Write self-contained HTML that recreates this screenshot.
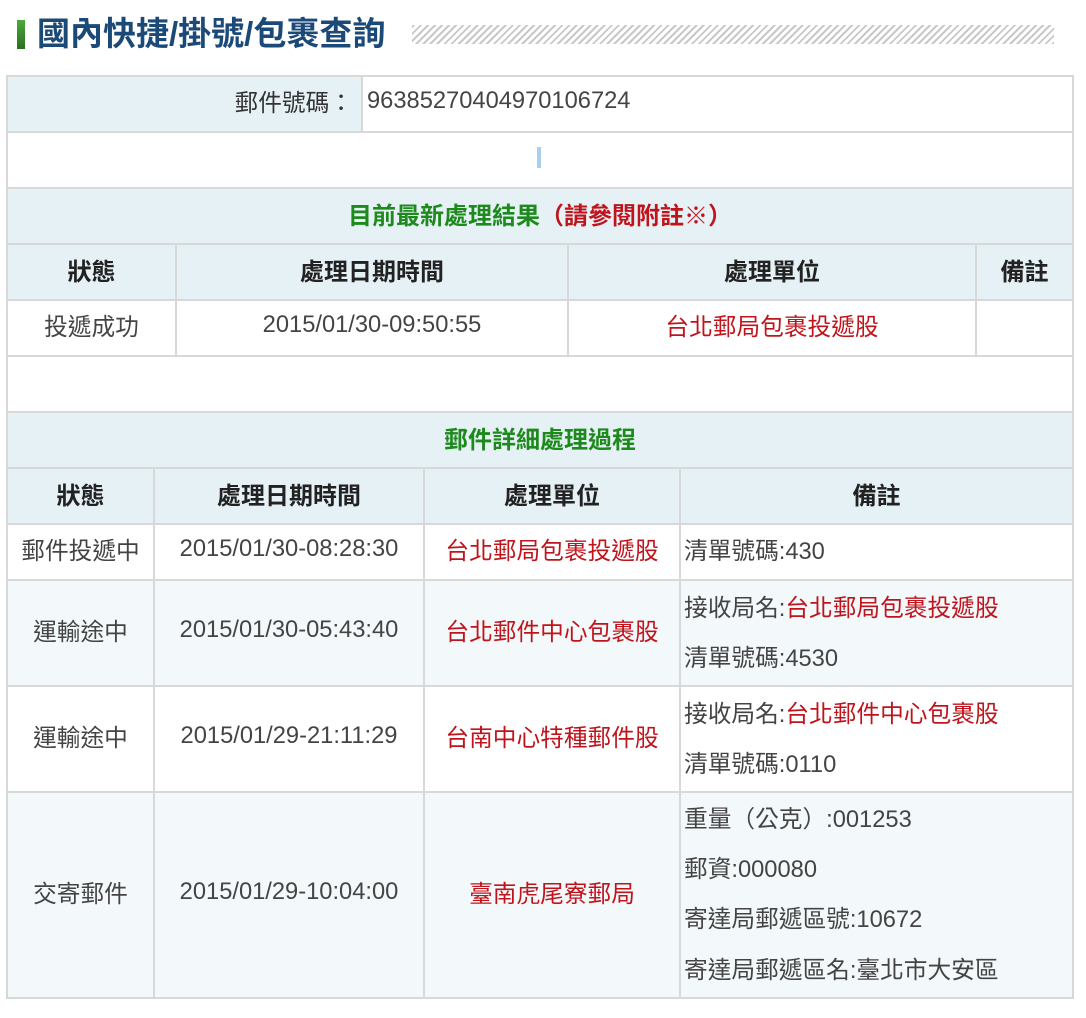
<!DOCTYPE html>
<html><head><meta charset="utf-8"><style>
body{margin:0;background:#fff;width:1086px;height:1018px;position:relative;overflow:hidden;font-family:"Liberation Sans","Noto Sans CJK TC",sans-serif;color:#444;}
.c{position:absolute;box-sizing:border-box;border:2px solid #d8d8d8;display:flex;align-items:center;justify-content:center;font-size:23.7px;background:#fff;padding-bottom:6px;}
.h{background:#e6f1f6;font-weight:bold;color:#222;font-size:24px;}
.l{background:#f3f8fa;}
.g{color:#1e8a1e;font-weight:bold;}
.r{color:#c0141c;}
.rm{justify-content:flex-start;padding-left:3px;}
.mt div{position:absolute;left:3px;white-space:nowrap;}
</style></head><body>
<div style="position:absolute;left:17px;top:20px;width:8px;height:29px;background:linear-gradient(#4caa3c,#2b6e22);"></div>
<div style="position:absolute;left:37px;top:13px;font-size:33px;font-weight:bold;color:#1b4a78;line-height:42px;">國內快捷/掛號/包裹查詢</div>
<div style="position:absolute;left:412px;top:25px;width:642px;height:19px;background:repeating-linear-gradient(-45deg,#c8c8c8 0 2px,#fff 2px 5px);"></div>

<div class="c h" style="left:6px;top:75px;width:357px;height:58px;justify-content:flex-end;padding-right:8px;font-weight:normal;color:#333;font-size:23.7px;">郵件號碼：</div>
<div class="c" style="left:361px;top:75px;width:713px;height:58px;justify-content:flex-start;padding-left:4px;color:#444;">96385270404970106724</div>
<div class="c" style="left:6px;top:131px;width:1068px;height:58px;padding-bottom:0"><div style="width:4px;height:21px;background:#a9d0ee;margin-left:-2px;margin-top:-6px"></div></div>
<div class="c h g" style="left:6px;top:187px;width:1068px;height:58px;">目前最新處理結果<span style="color:#c0141c">（請參閱附註※）</span></div>

<div class="c h" style="left:6px;top:243px;width:171px;height:58px;">狀態</div>
<div class="c h" style="left:175px;top:243px;width:394px;height:58px;">處理日期時間</div>
<div class="c h" style="left:567px;top:243px;width:410px;height:58px;">處理單位</div>
<div class="c h" style="left:975px;top:243px;width:99px;height:58px;">備註</div>
<div class="c" style="left:6px;top:299px;width:171px;height:58px;">投遞成功</div>
<div class="c" style="left:175px;top:299px;width:394px;height:58px;">2015/01/30-09:50:55</div>
<div class="c r" style="left:567px;top:299px;width:410px;height:58px;">台北郵局包裹投遞股</div>
<div class="c" style="left:975px;top:299px;width:99px;height:58px;"></div>
<div class="c" style="left:6px;top:355px;width:1068px;height:58px;"></div>
<div class="c h g" style="left:6px;top:411px;width:1068px;height:58px;">郵件詳細處理過程</div>

<div class="c h" style="left:6px;top:467px;width:149px;height:58px;">狀態</div>
<div class="c h" style="left:153px;top:467px;width:272px;height:58px;">處理日期時間</div>
<div class="c h" style="left:423px;top:467px;width:258px;height:58px;">處理單位</div>
<div class="c h" style="left:679px;top:467px;width:395px;height:58px;">備註</div>

<div class="c" style="left:6px;top:523px;width:149px;height:58px;">郵件投遞中</div>
<div class="c" style="left:153px;top:523px;width:272px;height:58px;">2015/01/30-08:28:30</div>
<div class="c r" style="left:423px;top:523px;width:258px;height:58px;">台北郵局包裹投遞股</div>
<div class="c rm" style="left:679px;top:523px;width:395px;height:58px;">清單號碼:430</div>

<div class="c l" style="left:6px;top:579px;width:149px;height:108px;">運輸途中</div>
<div class="c l" style="left:153px;top:579px;width:272px;height:108px;">2015/01/30-05:43:40</div>
<div class="c l r" style="left:423px;top:579px;width:258px;height:108px;">台北郵件中心包裹股</div>
<div class="c l mt" style="left:679px;top:579px;width:395px;height:108px;"><div style="top:8px">接收局名:<span class="r">台北郵局包裹投遞股</span></div><div style="top:58px">清單號碼:4530</div></div>

<div class="c" style="left:6px;top:685px;width:149px;height:108px;">運輸途中</div>
<div class="c" style="left:153px;top:685px;width:272px;height:108px;">2015/01/29-21:11:29</div>
<div class="c r" style="left:423px;top:685px;width:258px;height:108px;">台南中心特種郵件股</div>
<div class="c mt" style="left:679px;top:685px;width:395px;height:108px;"><div style="top:8px">接收局名:<span class="r">台北郵件中心包裹股</span></div><div style="top:58px">清單號碼:0110</div></div>

<div class="c l" style="left:6px;top:791px;width:149px;height:208px;">交寄郵件</div>
<div class="c l" style="left:153px;top:791px;width:272px;height:208px;">2015/01/29-10:04:00</div>
<div class="c l r" style="left:423px;top:791px;width:258px;height:208px;">臺南虎尾寮郵局</div>
<div class="c l mt" style="left:679px;top:791px;width:395px;height:208px;"><div style="top:7px">重量（公克）:001253</div><div style="top:57px">郵資:000080</div><div style="top:107px">寄達局郵遞區號:10672</div><div style="top:158px">寄達局郵遞區名:臺北市大安區</div></div>
</body></html>
